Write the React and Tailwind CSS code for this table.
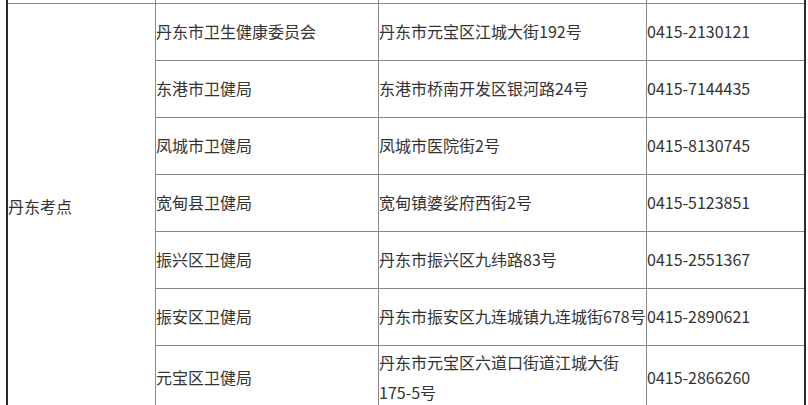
import React from "react";

const rows = [
  ["丹东市卫生健康委员会", "丹东市元宝区江城大街192号", "0415-2130121"],
  ["东港市卫健局", "东港市桥南开发区银河路24号", "0415-7144435"],
  ["凤城市卫健局", "凤城市医院街2号", "0415-8130745"],
  ["宽甸县卫健局", "宽甸镇婆娑府西街2号", "0415-5123851"],
  ["振兴区卫健局", "丹东市振兴区九纬路83号", "0415-2551367"],
  ["振安区卫健局", "丹东市振安区九连城镇九连城街678号", "0415-2890621"],
  ["元宝区卫健局", "丹东市元宝区六道口街道江城大街175-5号", "0415-2866260"],
];

export default function App() {
  return (
    <div
      className="w-[808px] h-[405px] overflow-hidden bg-white"
      style={{ fontFamily: '"Noto Sans CJK SC", "Noto Sans", sans-serif' }}
    >
      <div className="ml-[6px] w-[800px] border-x-2 border-[#2a2a2a]">
        <div className="grid grid-cols-[147px_222px_267px_157px] grid-rows-[3px_repeat(6,56px)_64px] gap-px bg-[#8a8a8a] text-[16px] text-[#333] leading-[30px]">
          <div className="bg-white" />
          <div className="bg-white" />
          <div className="bg-white" />
          <div className="bg-white" />
          <div className="row-span-7 bg-white flex items-center pb-[3px]">丹东考点</div>
          {rows.map((r, i) => (
            <React.Fragment key={i}>
              <div className="bg-white flex items-center whitespace-nowrap pb-[3px]">{r[0]}</div>
              <div className="bg-white flex items-center pb-[3px]">{r[1]}</div>
              <div className="bg-white flex items-center whitespace-nowrap pb-[3px]">{r[2]}</div>
            </React.Fragment>
          ))}
        </div>
      </div>
    </div>
  );
}
